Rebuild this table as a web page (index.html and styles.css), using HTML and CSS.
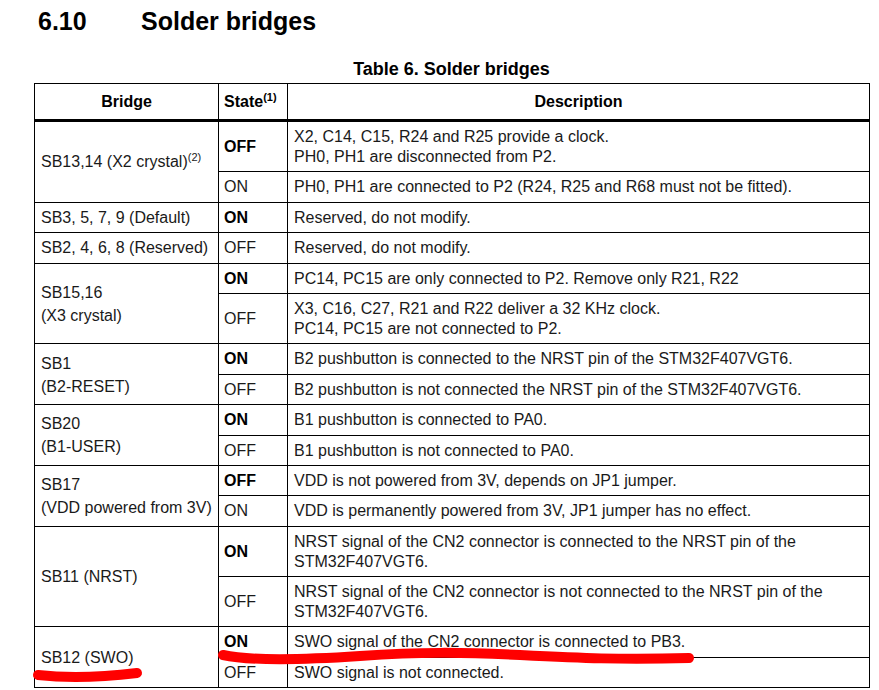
FILE: index.html
```html
<!DOCTYPE html>
<html lang="en">
<head>
<meta charset="utf-8">
<title>Solder bridges</title>
<link rel="stylesheet" href="styles.css">
</head>
<body>
<div class="page">
  <h2 class="section-title"><span class="sec-num">6.10</span><span class="sec-name">Solder bridges</span></h2>
  <p class="caption">Table 6. Solder bridges</p>
  <table class="sb-table">
    <colgroup>
      <col class="c-bridge">
      <col class="c-state">
      <col class="c-desc">
    </colgroup>
    <thead>
      <tr>
        <th>Bridge</th>
        <th class="th-state">State<sup>(1)</sup></th>
        <th>Description</th>
      </tr>
    </thead>
    <tbody>
      <tr>
        <td rowspan="2" class="bridge">SB13,14 (X2 crystal)<sup>(2)</sup></td>
        <td class="state on">OFF</td>
        <td class="desc">X2, C14, C15, R24 and R25 provide a clock.<br>PH0, PH1 are disconnected from P2.</td>
      </tr>
      <tr>
        <td class="state">ON</td>
        <td class="desc">PH0, PH1 are connected to P2 (R24, R25 and R68 must not be fitted).</td>
      </tr>
      <tr>
        <td class="bridge">SB3, 5, 7, 9 (Default)</td>
        <td class="state on">ON</td>
        <td class="desc">Reserved, do not modify.</td>
      </tr>
      <tr>
        <td class="bridge">SB2, 4, 6, 8 (Reserved)</td>
        <td class="state">OFF</td>
        <td class="desc">Reserved, do not modify.</td>
      </tr>
      <tr>
        <td rowspan="2" class="bridge two">SB15,16<br>(X3 crystal)</td>
        <td class="state on">ON</td>
        <td class="desc">PC14, PC15 are only connected to P2. Remove only R21, R22</td>
      </tr>
      <tr>
        <td class="state">OFF</td>
        <td class="desc">X3, C16, C27, R21 and R22 deliver a 32 KHz clock.<br>PC14, PC15 are not connected to P2.</td>
      </tr>
      <tr>
        <td rowspan="2" class="bridge two">SB1<br>(B2-RESET)</td>
        <td class="state on">ON</td>
        <td class="desc">B2 pushbutton is connected to the NRST pin of the STM32F407VGT6.</td>
      </tr>
      <tr>
        <td class="state">OFF</td>
        <td class="desc">B2 pushbutton is not connected the NRST pin of the STM32F407VGT6.</td>
      </tr>
      <tr>
        <td rowspan="2" class="bridge two">SB20<br>(B1-USER)</td>
        <td class="state on">ON</td>
        <td class="desc">B1 pushbutton is connected to PA0.</td>
      </tr>
      <tr>
        <td class="state">OFF</td>
        <td class="desc">B1 pushbutton is not connected to PA0.</td>
      </tr>
      <tr>
        <td rowspan="2" class="bridge two">SB17<br>(VDD powered from 3V)</td>
        <td class="state on">OFF</td>
        <td class="desc">VDD is not powered from 3V, depends on JP1 jumper.</td>
      </tr>
      <tr>
        <td class="state">ON</td>
        <td class="desc">VDD is permanently powered from 3V, JP1 jumper has no effect.</td>
      </tr>
      <tr>
        <td rowspan="2" class="bridge">SB11 (NRST)</td>
        <td class="state on">ON</td>
        <td class="desc">NRST signal of the CN2 connector is connected to the NRST pin of the<br>STM32F407VGT6.</td>
      </tr>
      <tr>
        <td class="state">OFF</td>
        <td class="desc">NRST signal of the CN2 connector is not connected to the NRST pin of the<br>STM32F407VGT6.</td>
      </tr>
      <tr>
        <td rowspan="2" class="bridge">SB12 (SWO)</td>
        <td class="state on">ON</td>
        <td class="desc">SWO signal of the CN2 connector is connected to PB3.</td>
      </tr>
      <tr>
        <td class="state">OFF</td>
        <td class="desc">SWO signal is not connected.</td>
      </tr>
    </tbody>
  </table>
</div>
<svg class="marks" width="879" height="690" viewBox="0 0 879 690" aria-hidden="true">
  <path d="M38,675 Q80,680 137,673" />
  <path d="M223,655 C250,661 300,660 360,656 S 460,652 520,655 S 620,660 689,658" />
</svg>
</body>
</html>
```

FILE: styles.css
```css
html, body {
  margin: 0;
  padding: 0;
  background: #ffffff;
}

body {
  font-family: "Liberation Sans", Arial, sans-serif;
  color: #1a1a1a;
  width: 879px;
  height: 690px;
  overflow: hidden;
  position: relative;
}

.page {
  padding: 6px 0 0 34px;
}

.section-title {
  margin: 0;
  display: flex;
  font-size: 25px;
  line-height: 30px;
  font-weight: bold;
  color: #000;
  padding-left: 4px;
}

.sec-num {
  width: 103px;
}

.caption {
  margin: 23px 0 0 0;
  width: 835px;
  text-align: center;
  font-size: 18px;
  line-height: 20px;
  font-weight: bold;
  color: #000;
}

.sb-table {
  margin-top: 4px;
  border-collapse: collapse;
  table-layout: fixed;
  width: 835px;
  font-size: 16px;
}

.c-bridge { width: 184px; }
.c-state { width: 69px; }
.c-desc { width: 582px; }

.sb-table th,
.sb-table td {
  border: 1px solid #000;
  vertical-align: middle;
}

.sb-table th {
  font-weight: bold;
  color: #000;
  text-align: center;
  line-height: 20px;
  padding: 8px 5px 7px 5px;
  border-bottom: 3px solid #000;
}

.sb-table th.th-state {
  text-align: left;
}

.sb-table td {
  line-height: 20px;
  padding: 5px 5px 4.4px 6px;
}

.sb-table td.desc.dbl {
  padding-bottom: 4px;
}

.sb-table td.state {
  padding-left: 5px;
}

.sb-table td.on {
  font-weight: bold;
  color: #000;
}

.sb-table td.bridge {
  padding-left: 6px;
}

.sb-table td.bridge.two {
  line-height: 23px;
}

sup {
  font-size: 11px;
  line-height: 0;
  vertical-align: 6px;
}

.marks {
  position: absolute;
  left: 0;
  top: 0;
  pointer-events: none;
}

.marks path {
  fill: none;
  stroke: #ff0000;
  stroke-width: 10;
  stroke-linecap: round;
  stroke-linejoin: round;
}
```
